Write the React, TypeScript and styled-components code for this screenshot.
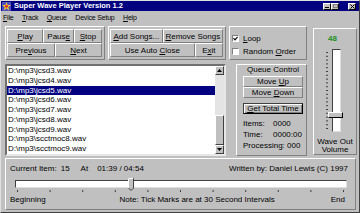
import styled, { createGlobalStyle } from 'styled-components'

const GlobalStyle = createGlobalStyle`
  html, body {
    margin: 0;
    padding: 0;
    background: #c0c0c0;
  }
  body {
    font-family: "Liberation Sans", Arial, sans-serif;
    font-size: 8px;
    color: #000;
  }
  #root {
    width: 360px;
    height: 213px;
  }
`

const raised = `
  box-sizing: border-box;
  border: 1px solid;
  border-color: #fff #808080 #808080 #fff;
`

const Window = styled.div`
  box-sizing: border-box;
  width: 360px;
  height: 213px;
  background: #c0c0c0;
  border: 1px solid;
  border-color: #dfdfdf #404040 #404040 #dfdfdf;
  display: flex;
  flex-direction: column;
  overflow: hidden;
`

const TitleBar = styled.div`
  height: 10px;
  background: #000080;
  display: flex;
  align-items: center;
  padding: 0 3px 0 1px;
  gap: 3px;
`

const TitleText = styled.span`
  flex: 1;
  color: #fff;
  font-weight: bold;
  font-size: 7.5px;
  line-height: 10px;
  white-space: nowrap;
`

const CaptionButton = styled.span<{ $gapLeft?: number }>`
  box-sizing: border-box;
  width: 8px;
  height: 7px;
  background: #c0c0c0;
  border: 1px solid;
  border-color: #fff #000 #000 #fff;
  display: flex;
  align-items: center;
  justify-content: center;
  margin-left: ${(p) => p.$gapLeft ?? -3}px;
`

const MenuBar = styled.div`
  height: 13px;
  display: flex;
  align-items: center;
  gap: 8.5px;
  padding-left: 2px;
  font-size: 7px;
  letter-spacing: -0.2px;
  white-space: nowrap;
`

const Body = styled.div`
  display: flex;
  flex-direction: column;
  gap: 2px;
  padding: 2px 1px 0 4px;
`

const TopGrid = styled.div`
  display: grid;
  grid-template-columns: 100px 118px 78px 47px;
  grid-template-rows: 34px 92px;
  column-gap: 3px;
  row-gap: 4px;
`

const ButtonGroup = styled.div`
  ${raised}
  padding: 2px 2px 2px 1px;
  display: flex;
  flex-direction: column;
`

const ButtonRow = styled.div`
  display: flex;
  height: 14px;
`

const Button = styled.button<{ $grow?: number; $height?: number; $default?: boolean }>`
  box-sizing: border-box;
  flex: ${(p) => p.$grow ?? 1} 1 0;
  height: ${(p) => (p.$height ? `${p.$height}px` : 'auto')};
  margin: 0;
  padding: 0;
  background: #c0c0c0;
  font-family: inherit;
  font-size: 8px;
  color: #000;
  white-space: nowrap;
  border: 1px solid;
  border-color: ${(p) =>
    p.$default ? '#404040 #000 #000 #404040' : '#fff #808080 #808080 #fff'};
  box-shadow: ${(p) =>
    p.$default ? 'inset 1px 1px #fff, inset -1px -1px #808080' : 'none'};
`

const OptionsPanel = styled.div`
  ${raised}
  padding: 6px 2px 0;
  display: flex;
  flex-direction: column;
  gap: 3px;
`

const OptionRow = styled.label`
  display: flex;
  align-items: center;
  gap: 4px;
  height: 10px;
  white-space: nowrap;
`

const CheckBox = styled.span`
  box-sizing: border-box;
  width: 7px;
  height: 7px;
  background: #fff;
  border: 1px solid;
  border-color: #808080 #fff #fff #808080;
  display: flex;
  align-items: center;
  justify-content: center;
`

const ListBox = styled.div`
  grid-column: 1 / 3;
  box-sizing: border-box;
  background: #fff;
  border: 2px solid;
  border-color: #707070 #e8e8e8 #e8e8e8 #707070;
  display: flex;
  overflow: hidden;
`

const ListItems = styled.div`
  flex: 1;
  display: flex;
  flex-direction: column;
`

const ListItem = styled.div<{ $selected?: boolean }>`
  height: 9.75px;
  line-height: 9.75px;
  padding-left: 1px;
  white-space: nowrap;
  background: ${(p) => (p.$selected ? '#000080' : 'transparent')};
  color: ${(p) => (p.$selected ? '#fff' : '#000')};
`

const ScrollBar = styled.div`
  width: 9px;
  display: flex;
  flex-direction: column;
`

const ScrollArrow = styled.div`
  box-sizing: border-box;
  height: 9px;
  background: #c0c0c0;
  border: 1px solid;
  border-color: #fff #404040 #404040 #fff;
  display: flex;
  align-items: center;
  justify-content: center;
`

const ScrollTrack = styled.div`
  flex: 1;
  background: #e4e4e4;
`

const ScrollThumb = styled.div`
  box-sizing: border-box;
  height: 30px;
  background: #c0c0c0;
  border: 1px solid;
  border-color: #fff #404040 #404040 #fff;
`

const QueuePanel = styled.div`
  ${raised}
  margin-left: 7px;
  padding: 0 3px 0 6px;
  display: flex;
  flex-direction: column;
`

const PanelTitle = styled.div`
  height: 10px;
  line-height: 10px;
  text-align: center;
  white-space: nowrap;
  margin-bottom: 1px;
`

const Spacer = styled.div<{ $h: number }>`
  height: ${(p) => p.$h}px;
  flex: none;
`

const InfoRow = styled.div`
  display: flex;
  height: 11px;
  line-height: 11px;
  white-space: nowrap;
`

const InfoLabel = styled.span`
  min-width: 30px;
`

const VolumePanel = styled.div`
  grid-column: 4;
  grid-row: 1 / 3;
  ${raised}
  margin: 2px 0 1px 3px;
  padding-top: 5px;
  display: flex;
  flex-direction: column;
  align-items: center;
`

const VolumeValue = styled.div`
  height: 9px;
  line-height: 9px;
  font-weight: bold;
  color: #189018;
  margin-right: 5px;
`

const VSlider = styled.div`
  position: relative;
  width: 18px;
  height: 83px;
  margin-top: 6px;
  display: flex;
  gap: 2px;
`

const VTrack = styled.div`
  box-sizing: border-box;
  width: 9px;
  height: 100%;
  background: #fff;
  border: 1px solid;
  border-color: #404040 #dfdfdf #dfdfdf #404040;
  margin-left: 1px;
`

const VThumb = styled.div`
  position: absolute;
  left: 2px;
  top: 63px;
  box-sizing: border-box;
  width: 15px;
  height: 6px;
  background: #c0c0c0;
  border: 1px solid;
  border-color: #fff #000 #000 #fff;
`

const VolumeLabel = styled.div`
  margin-top: 6px;
  line-height: 8px;
  text-align: center;
`

const StatusPanel = styled.div`
  ${raised}
  height: 52px;
  margin-right: 2px;
  padding: 5px 7px 0 4px;
  display: flex;
  flex-direction: column;
`

const StatusRow = styled.div`
  display: flex;
  align-items: center;
  height: 10px;
  line-height: 10px;
  white-space: nowrap;
`

const Field = styled.span<{ $left?: number }>`
  margin-left: ${(p) => p.$left ?? 0}px;
`

const Credit = styled.span`
  margin-left: auto;
`

const HTrackWrap = styled.div`
  position: relative;
  margin: 6px 1px 0 5px;
`

const HTrack = styled.div`
  box-sizing: border-box;
  height: 8px;
  background: #fff;
  border: 1px solid;
  border-color: #404040 #dfdfdf #dfdfdf #404040;
`

const HThumb = styled.svg`
  position: absolute;
  left: 113px;
  top: -2px;
`

const Ticks = styled.svg`
  display: block;
  margin-left: 5px;
  margin-bottom: 2px;
`

const EndLabel = styled.span`
  margin-left: auto;
  margin-right: 3px;
`

const songs = [
  'D:\\mp3\\jcsd3.wav',
  'D:\\mp3\\jcsd4.wav',
  'D:\\mp3\\jcsd5.wav',
  'D:\\mp3\\jcsd6.wav',
  'D:\\mp3\\jcsd7.wav',
  'D:\\mp3\\jcsd8.wav',
  'D:\\mp3\\jcsd9.wav',
  'D:\\mp3\\scctmoc8.wav',
  'D:\\mp3\\scctmoc9.wav',
]

function AppIcon() {
  return (
    <svg width="9" height="9" viewBox="0 0 9 9">
      <rect width="9" height="9" fill="#5050c0" />
      <polygon
        points="4.5,0 5.5,3 9,3 6.2,5 7.2,8.5 4.5,6.3 1.8,8.5 2.8,5 0,3 3.5,3"
        fill="#ffd020"
      />
      <circle cx="4.5" cy="4.3" r="1.4" fill="#e02020" />
    </svg>
  )
}

function Arrow({ up }: { up?: boolean }) {
  return (
    <svg width="5" height="3" viewBox="0 0 5 3">
      <polygon points={up ? '2.5,0 5,3 0,3' : '0,0 5,0 2.5,3'} fill="#000" />
    </svg>
  )
}

export default function App() {
  const volTicks = Array.from({ length: 21 }, (_, i) => 3 + i * 3.8)
  const timeTicks = Array.from({ length: 11 }, (_, i) => 2 + i * 32.6)

  return (
    <>
      <GlobalStyle />
      <Window>
        <TitleBar>
          <AppIcon />
          <TitleText>Super Wave Player Version 1.2</TitleText>
          <CaptionButton $gapLeft={0}>
            <svg width="4" height="4" viewBox="0 0 4 4">
              <rect x="0" y="3" width="4" height="1" fill="#000" />
            </svg>
          </CaptionButton>
          <CaptionButton>
            <svg width="5" height="4" viewBox="0 0 5 4">
              <rect x="0.5" y="0.5" width="4" height="3" fill="none" stroke="#808080" />
            </svg>
          </CaptionButton>
          <CaptionButton $gapLeft={6}>
            <svg width="5" height="5" viewBox="0 0 5 5">
              <path d="M0.5 0.5 L4.5 4.5 M4.5 0.5 L0.5 4.5" stroke="#000" strokeWidth="1" />
            </svg>
          </CaptionButton>
        </TitleBar>

        <MenuBar>
          <span><u>F</u>ile</span>
          <span><u>T</u>rack</span>
          <span><u>Q</u>ueue</span>
          <span>Device Setup</span>
          <span><u>H</u>elp</span>
        </MenuBar>

        <Body>
          <TopGrid>
            <ButtonGroup>
              <ButtonRow>
                <Button $grow={37}><u>P</u>lay</Button>
                <Button $grow={31}>Paus<u>e</u></Button>
                <Button $grow={28}><u>S</u>top</Button>
              </ButtonRow>
              <ButtonRow>
                <Button $grow={48}>Pre<u>v</u>ious</Button>
                <Button $grow={47}><u>N</u>ext</Button>
              </ButtonRow>
            </ButtonGroup>

            <ButtonGroup>
              <ButtonRow>
                <Button $grow={52}><u>A</u>dd Songs...</Button>
                <Button $grow={60}><u>R</u>emove Songs</Button>
              </ButtonRow>
              <ButtonRow>
                <Button $grow={85}>Use Auto <u>C</u>lose</Button>
                <Button $grow={27}>E<u>x</u>it</Button>
              </ButtonRow>
            </ButtonGroup>

            <OptionsPanel>
              <OptionRow>
                <CheckBox>
                  <svg width="5" height="5" viewBox="0 0 5 5">
                    <path d="M0.5 2.2 L2 3.8 L4.6 0.8" fill="none" stroke="#000" strokeWidth="1.2" />
                  </svg>
                </CheckBox>
                <span><u>L</u>oop</span>
              </OptionRow>
              <OptionRow>
                <CheckBox />
                <span>Random <u>O</u>rder</span>
              </OptionRow>
            </OptionsPanel>

            <VolumePanel>
              <VolumeValue>48</VolumeValue>
              <VSlider>
                <svg width="3" height="83" viewBox="0 0 3 83">
                  {volTicks.map((y) => (
                    <rect key={y} x="0" y={y} width="2" height="1" fill="#404040" />
                  ))}
                </svg>
                <VTrack />
                <VThumb />
              </VSlider>
              <VolumeLabel>
                Wave Out
                <br />
                Volume
              </VolumeLabel>
            </VolumePanel>

            <ListBox>
              <ListItems>
                {songs.map((s, i) => (
                  <ListItem key={s} $selected={i === 2}>
                    {s}
                  </ListItem>
                ))}
              </ListItems>
              <ScrollBar>
                <ScrollArrow>
                  <Arrow up />
                </ScrollArrow>
                <ScrollTrack />
                <ScrollThumb />
                <ScrollArrow>
                  <Arrow />
                </ScrollArrow>
              </ScrollBar>
            </ListBox>

            <QueuePanel>
              <PanelTitle>Queue Control</PanelTitle>
              <Button $grow={0} $height={11}>Move <u>U</u>p</Button>
              <Button $grow={0} $height={11}>Move <u>D</u>own</Button>
              <Spacer $h={5} />
              <Button $grow={0} $height={12} $default><u>G</u>et Total Time</Button>
              <Spacer $h={4} />
              <InfoRow>
                <InfoLabel>Items:</InfoLabel>
                <span>0000</span>
              </InfoRow>
              <InfoRow>
                <InfoLabel>Time:</InfoLabel>
                <span>0000:00</span>
              </InfoRow>
              <InfoRow>
                <InfoLabel>Processing:</InfoLabel>
                <span>&nbsp;000</span>
              </InfoRow>
            </QueuePanel>
          </TopGrid>

          <StatusPanel>
            <StatusRow>
              <Field>Current Item:</Field>
              <Field $left={4}>15</Field>
              <Field $left={11}>At</Field>
              <Field $left={9}>01:39 / 04:54</Field>
              <Credit>Written by: Daniel Lewis (C) 1997</Credit>
            </StatusRow>
            <HTrackWrap>
              <HTrack />
              <HThumb width="6" height="13" viewBox="0 0 6 13">
                <polygon points="0.5,0.5 5.5,0.5 5.5,10 3,12.5 0.5,10" fill="#c0c0c0" stroke="#404040" strokeWidth="1" />
                <polyline points="0.5,10 0.5,0.5 5,0.5" fill="none" stroke="#fff" strokeWidth="1" />
              </HThumb>
            </HTrackWrap>
            <Ticks width="332" height="5" viewBox="0 0 332 5">
              {timeTicks.map((x) => (
                <rect key={x} x={x} y="2" width="1" height="2" fill="#404040" />
              ))}
            </Ticks>
            <StatusRow>
              <Field>Beginning</Field>
              <Field $left={74}>Note: Tick Marks are at 30 Second Intervals</Field>
              <EndLabel>End</EndLabel>
            </StatusRow>
          </StatusPanel>
        </Body>
      </Window>
    </>
  )
}
